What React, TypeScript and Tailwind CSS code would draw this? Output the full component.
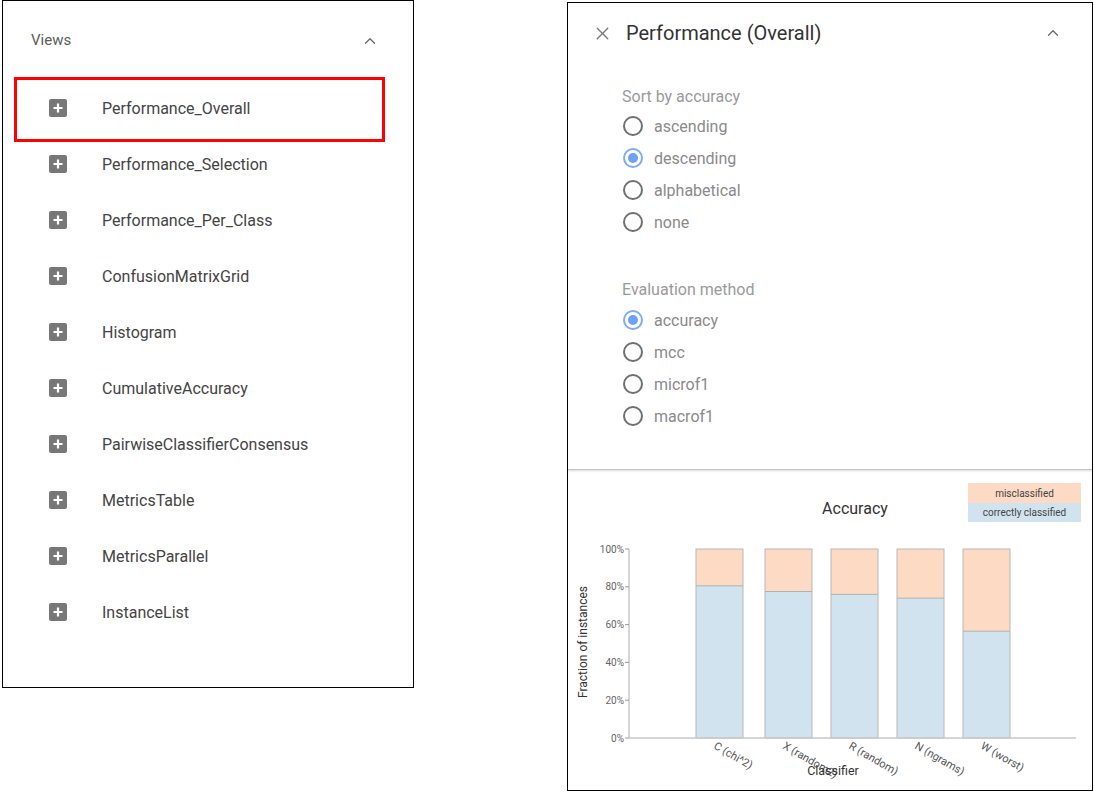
import { ChevronUp, X } from "lucide-react";

const views = [
  "Performance_Overall",
  "Performance_Selection",
  "Performance_Per_Class",
  "ConfusionMatrixGrid",
  "Histogram",
  "CumulativeAccuracy",
  "PairwiseClassifierConsensus",
  "MetricsTable",
  "MetricsParallel",
  "InstanceList",
];

const sortOptions = ["ascending", "descending", "alphabetical", "none"];
const evalOptions = ["accuracy", "mcc", "microf1", "macrof1"];

const bars = [
  { label: "C (chi^2)", x: 696, correct: 0.805 },
  { label: "X (random2)", x: 765, correct: 0.775 },
  { label: "R (random)", x: 831, correct: 0.76 },
  { label: "N (ngrams)", x: 897, correct: 0.74 },
  { label: "W (worst)", x: 963, correct: 0.565 },
];

const PlusBox = () => (
  <div className="w-[18px] h-[18px] rounded-[2px] bg-[#787878] flex items-center justify-center shrink-0">
    <svg width="12" height="12" viewBox="0 0 12 12">
      <path d="M6 1.5v9M1.5 6h9" stroke="#fff" strokeWidth="2.2" />
    </svg>
  </div>
);

const Radio = ({ label, checked }: { label: string; checked?: boolean }) => (
  <div className="h-[32px] flex items-center pl-[1px]">
    {checked ? (
      <div className="w-[20px] h-[20px] rounded-full border-2 border-[#7eabf8] flex items-center justify-center">
        <div className="w-[10px] h-[10px] rounded-full bg-[#6ea1f6]" />
      </div>
    ) : (
      <div className="w-[20px] h-[20px] rounded-full border-2 border-[#707070]" />
    )}
    <span className="ml-[11px] pt-[1px] text-[16px] text-[#8a8a8a]">{label}</span>
  </div>
);

const Chart = () => {
  const top = 549;
  const bottom = 738;
  const h = bottom - top;
  const ticks = [0, 20, 40, 60, 80, 100];
  return (
    <svg width="524" height="319" className="block">
      <g transform="translate(-568,-470)" fontFamily="Roboto, 'Liberation Sans', sans-serif">
        <text x="855" y="514" textAnchor="middle" fontSize="16" fill="#333">
          Accuracy
        </text>
        <rect x="968" y="483" width="113" height="20" fill="#fddac4" />
        <rect x="968" y="503" width="113" height="19" fill="#d1e3ee" />
        <text x="1024.5" y="496.5" textAnchor="middle" fontSize="10" fill="#444">
          misclassified
        </text>
        <text x="1024.5" y="515.5" textAnchor="middle" fontSize="10" fill="#444">
          correctly classified
        </text>

        {bars.map((b) => {
          const yc = bottom - b.correct * h;
          return (
            <g key={b.label}>
              <rect x={b.x} y={top} width="47" height={yc - top} fill="#fddac4" />
              <rect x={b.x} y={yc} width="47" height={bottom - yc} fill="#d1e3ee" />
              <rect x={b.x} y={top} width="47" height={h} fill="none" stroke="#b8b8b8" strokeWidth="1" />
              <line x1={b.x} x2={b.x + 47} y1={yc} y2={yc} stroke="#b0b0b0" strokeWidth="1" />
              <text
                x={b.x + 17}
                y={748}
                fontSize="11"
                fill="#555"
                transform={`rotate(30 ${b.x + 17} 748)`}
              >
                {b.label}
              </text>
            </g>
          );
        })}

        <line x1="629" x2="629" y1={top} y2={bottom} stroke="#c8c8c8" strokeWidth="1.5" />
        <line x1="629" x2="1076" y1={bottom} y2={bottom} stroke="#c8c8c8" strokeWidth="1.5" />
        {ticks.map((t) => {
          const y = bottom - (t / 100) * h;
          return (
            <g key={t}>
              <line x1="625" x2="629" y1={y} y2={y} stroke="#999" />
              <text x="624" y={y + 3.5} textAnchor="end" fontSize="10" fill="#666">
                {t}%
              </text>
            </g>
          );
        })}

        <text
          x="587"
          y="642"
          textAnchor="middle"
          fontSize="12"
          fill="#333"
          transform="rotate(-90 587 642)"
        >
          Fraction of instances
        </text>
        <text x="833" y="775" textAnchor="middle" fontSize="12.5" fill="#333">
          Classifier
        </text>
      </g>
    </svg>
  );
};

export default function App() {
  return (
    <div className="w-[1094px] h-[792px] bg-white flex items-start font-['Roboto','Liberation_Sans',sans-serif]">
      <div className="relative ml-[2px] w-[412px] h-[688px] border border-black">
        <div className="h-[79px] flex items-center justify-between pl-[28px] pr-[34px]">
          <span className="text-[15px] text-[#5c5c5c]">Views</span>
          <ChevronUp size={18} strokeWidth={1.75} className="text-[#6a6a6a]" />
        </div>
        <ul>
          {views.map((v) => (
            <li key={v} className="h-[56px] flex items-center pl-[46px]">
              <PlusBox />
              <span className="ml-[35px] pt-[1px] text-[16px] text-[#444]">{v}</span>
            </li>
          ))}
        </ul>
        <div className="absolute left-[11px] top-[76px] w-[371px] h-[65px] border-[3px] border-[#ff0000]" />
      </div>

      <div className="ml-[153px] mt-[2px] w-[526px] h-[789px] border border-black flex flex-col">
        <div className="h-[467px] border-b border-[#c4c4c4] shadow-[0_1px_2px_rgba(0,0,0,0.15)]">
          <div className="h-[60px] flex items-center pl-[24px] pr-[30px]">
            <X size={21} strokeWidth={1.6} className="text-[#777]" />
            <span className="ml-[13px] text-[20px] text-[#333]">Performance (Overall)</span>
            <ChevronUp size={18} strokeWidth={1.75} className="ml-auto text-[#6a6a6a]" />
          </div>
          <div className="pl-[54px] mt-[24px]">
            <div className="h-[20px] leading-[20px] text-[16px] text-[#9a9a9a]">Sort by accuracy</div>
            <div className="mt-[3px]">
              {sortOptions.map((o) => (
                <Radio key={o} label={o} checked={o === "descending"} />
              ))}
            </div>
            <div className="mt-[42px] h-[20px] leading-[20px] text-[16px] text-[#9a9a9a]">
              Evaluation method
            </div>
            <div className="mt-[4px]">
              {evalOptions.map((o) => (
                <Radio key={o} label={o} checked={o === "accuracy"} />
              ))}
            </div>
          </div>
        </div>
        <Chart />
      </div>
    </div>
  );
}
